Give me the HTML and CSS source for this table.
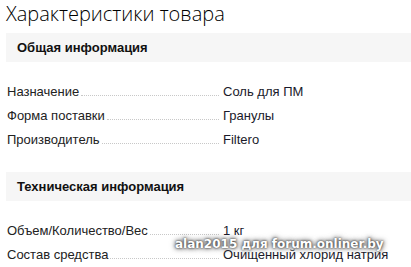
FILE: index.html
```html
<!DOCTYPE html>
<html lang="ru">
<head>
<meta charset="utf-8">
<link rel="stylesheet" href="styles.css">
</head>
<body>
<div class="page">
  <h1 class="title">Характеристики товара</h1>
  <section class="group">
    <h2 class="group-head">Общая информация</h2>
    <div class="rows">
      <div class="row"><span class="name"><span class="label">Назначение</span><span class="dots"></span></span><span class="value">Соль для ПМ</span></div>
      <div class="row"><span class="name"><span class="label">Форма поставки</span><span class="dots"></span></span><span class="value">Гранулы</span></div>
      <div class="row"><span class="name"><span class="label">Производитель</span><span class="dots"></span></span><span class="value">Filtero</span></div>
    </div>
  </section>
  <section class="group">
    <h2 class="group-head">Техническая информация</h2>
    <div class="rows">
      <div class="row"><span class="name"><span class="label">Объем/Количество/Вес</span><span class="dots"></span></span><span class="value">1 кг</span></div>
      <div class="row"><span class="name"><span class="label">Состав средства</span><span class="dots"></span></span><span class="value">Очищенный хлорид натрия</span></div>
    </div>
  </section>
  <div class="watermark">alan2015 для forum.onliner.by</div>
</div>
</body>
</html>
```
FILE: styles.css
```css
html, body {
  margin: 0;
  padding: 0;
  background: #ffffff;
}
body {
  font-family: "Liberation Sans", Arial, sans-serif;
  color: #1a1a1a;
  overflow: hidden;
}
.page {
  position: relative;
  box-sizing: border-box;
  padding: 0 0 0 6px;
  width: 411px;
  height: 267px;
  overflow: hidden;
}
.title {
  margin: 0;
  padding-top: 1px;
  font-family: "Open Sans", sans-serif;
  font-weight: 300;
  font-size: 20px;
  line-height: 26px;
  height: 32px;
  color: #000;
}
.group-head {
  margin: 0;
  background: #f6f6f6;
  height: 29px;
  line-height: 29px;
  padding-left: 11px;
  font-size: 13px;
  font-weight: bold;
  color: #111;
}
.rows {
  padding-top: 18px;
  padding-bottom: 20px;
}
.row {
  display: flex;
  align-items: baseline;
  height: 24px;
  line-height: 24px;
  font-size: 13px;
  padding-left: 1px;
}
.name {
  display: flex;
  align-items: baseline;
  width: 216px;
  flex: none;
}
.label {
  white-space: nowrap;
  color: #222;
}
.dots {
  flex: 1 1 0;
  min-width: 0;
  border-bottom: 1px dotted #c8c8c8;
  margin: 0 4px 0 2px;
}
.value {
  flex: none;
  color: #1a1a2a;
  white-space: nowrap;
}
.watermark {
  position: absolute;
  left: 175px;
  top: 237px;
  font-family: "DejaVu Sans", Verdana, sans-serif;
  font-weight: bold;
  font-size: 12px;
  line-height: 14px;
  color: #ffffff;
  text-shadow: 0 0 2px #333, 0 0 4px #555, 0 0 6px #777;
  white-space: nowrap;
}
```
